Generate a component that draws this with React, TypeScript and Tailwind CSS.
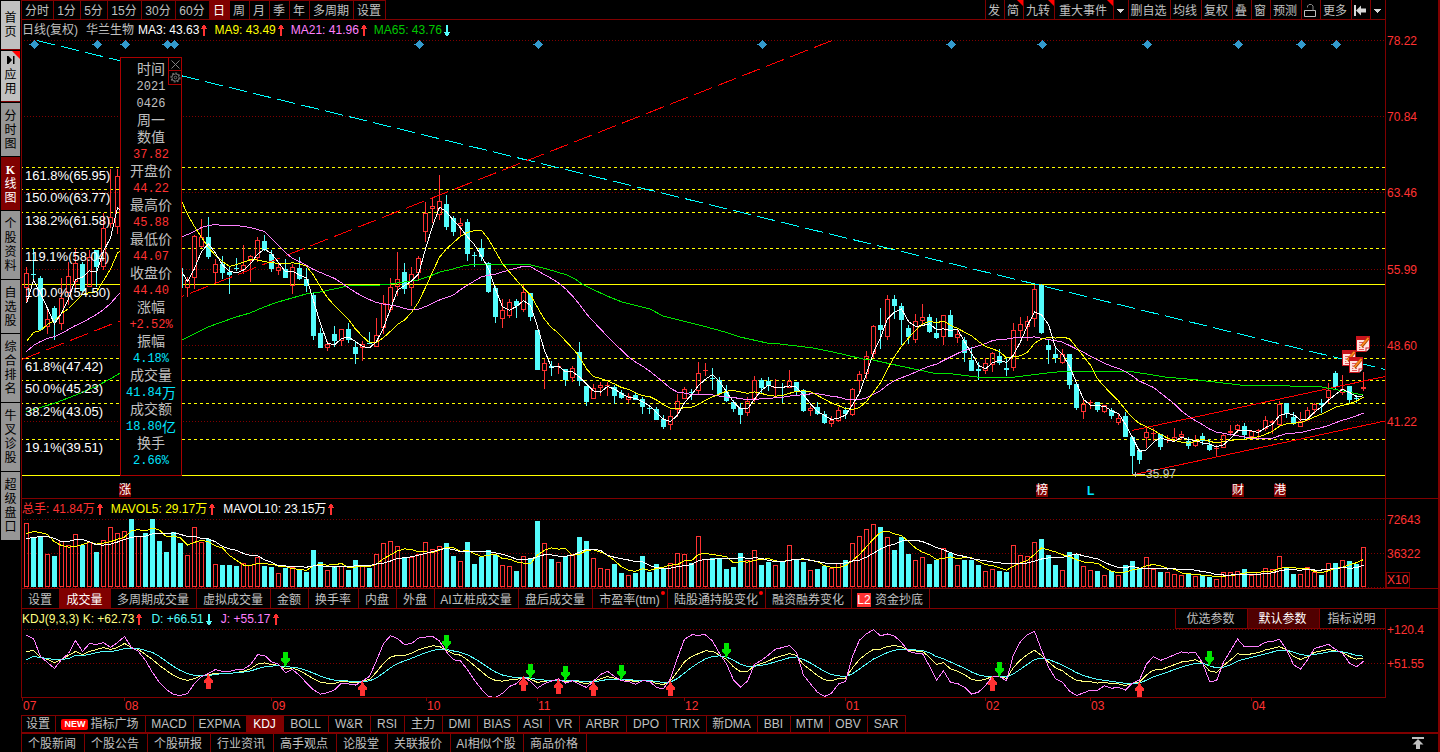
import { useState } from "react";
import type { ReactNode } from "react";
import clsx from "clsx";

type Direction = "u" | "d";
// direction, high, body top, body bottom, low (chart units, y grows downwards)
type Candle = [Direction, number, number, number, number];

const RED = "#ff3232";
const CYAN = "#54fcfc";
const MAROON = "#800000";

const CHART_LEFT = 22;
const CHART_WIDTH = 1363;

const EARLY_CANDLES: Candle[] = [
  ["u", 267, 273, 288, 302], ["d", 249, 274, 275, 282], ["d", 276, 278, 330, 331],
  ["u", 310, 319, 327, 334], ["d", 306, 308, 321, 340], ["u", 278, 298, 324, 330],
  ["u", 262, 276, 293, 305], ["u", 248, 263, 282, 290], ["d", 262, 264, 291, 292],
  ["u", 250, 257, 287, 287], ["d", 250, 250, 267, 287], ["u", 213, 228, 267, 270],
  ["u", 169, 217, 224, 228], ["u", 169, 176, 227, 234],
];

const LATE_CANDLES: Candle[] = [
  ["d", 266, 268, 288, 288], ["u", 277, 280, 288, 297], ["u", 235, 236, 278, 289],
  ["u", 219, 237, 247, 248], ["d", 217, 237, 257, 259], ["u", 259, 264, 273, 284],
  ["d", 256, 264, 273, 279], ["d", 266, 272, 275, 294], ["d", 258, 268, 269, 271],
  ["u", 245, 265, 270, 274], ["u", 255, 256, 261, 282], ["u", 237, 240, 258, 262],
  ["d", 235, 241, 250, 251], ["d", 250, 254, 269, 272], ["u", 262, 267, 271, 275],
  ["d", 259, 269, 278, 278], ["u", 264, 267, 286, 294], ["d", 257, 268, 279, 280],
  ["d", 268, 279, 286, 292], ["d", 292, 295, 336, 340], ["d", 328, 333, 348, 348],
  ["u", 341, 344, 348, 351], ["d", 326, 334, 341, 347], ["u", 329, 329, 341, 346],
  ["d", 323, 329, 340, 343], ["d", 342, 347, 354, 364], ["u", 341, 344, 348, 361],
  ["d", 332, 343, 344, 344], ["u", 318, 335, 347, 347], ["u", 295, 303, 328, 334],
  ["u", 278, 287, 310, 312], ["u", 252, 279, 287, 296], ["d", 263, 272, 289, 294],
  ["u", 267, 274, 288, 306], ["u", 256, 258, 273, 281], ["u", 202, 213, 232, 242],
  ["u", 198, 206, 209, 223], ["u", 175, 201, 215, 220], ["d", 195, 204, 227, 230],
  ["d", 216, 218, 232, 236], ["u", 218, 223, 226, 236], ["d", 219, 222, 254, 261],
  ["d", 252, 255, 256, 267], ["d", 239, 248, 257, 261], ["d", 262, 263, 292, 293],
  ["d", 286, 288, 317, 323], ["u", 299, 310, 319, 328], ["u", 299, 302, 316, 318],
  ["d", 299, 301, 306, 318], ["u", 285, 292, 310, 312], ["d", 293, 293, 317, 321],
  ["d", 330, 330, 370, 370], ["u", 359, 363, 371, 389], ["d", 361, 366, 368, 376],
  ["u", 363, 366, 367, 374], ["d", 369, 369, 380, 386], ["u", 366, 368, 378, 382],
  ["d", 342, 352, 381, 386], ["d", 386, 386, 402, 406], ["u", 384, 388, 399, 399],
  ["u", 382, 385, 388, 396], ["u", 382, 385, 386, 396], ["d", 385, 387, 396, 404],
  ["d", 390, 393, 398, 399], ["u", 393, 396, 400, 403], ["d", 393, 395, 400, 400],
  ["d", 397, 399, 407, 414], ["d", 405, 408, 409, 414], ["d", 407, 409, 420, 420],
  ["d", 415, 419, 427, 429], ["u", 410, 416, 425, 430], ["u", 394, 401, 410, 417],
  ["u", 387, 389, 399, 399], ["d", 389, 392, 393, 400], ["u", 362, 373, 391, 394],
  ["u", 363, 370, 371, 376], ["d", 368, 378, 379, 390], ["d", 377, 380, 394, 395],
  ["d", 385, 392, 401, 402], ["d", 400, 402, 409, 412], ["d", 403, 408, 415, 424],
  ["u", 397, 401, 413, 416], ["u", 376, 380, 399, 402], ["d", 378, 380, 388, 393],
  ["d", 377, 381, 386, 391], ["u", 379, 387, 388, 397], ["d", 383, 387, 388, 403],
  ["u", 370, 381, 388, 388], ["d", 382, 382, 391, 396], ["d", 389, 390, 411, 412],
  ["u", 406, 408, 411, 416], ["d", 402, 407, 414, 415], ["d", 411, 414, 423, 424],
  ["u", 416, 420, 424, 427], ["u", 407, 410, 421, 422], ["d", 407, 410, 414, 419],
  ["u", 388, 389, 415, 416], ["u", 371, 374, 381, 393], ["u", 351, 356, 374, 379],
  ["u", 325, 326, 354, 358], ["d", 308, 325, 330, 349], ["u", 295, 299, 337, 340],
  ["d", 295, 299, 306, 319], ["d", 303, 306, 320, 345], ["d", 325, 328, 337, 344],
  ["u", 314, 321, 340, 343], ["u", 304, 317, 321, 325], ["d", 314, 317, 332, 333],
  ["d", 318, 333, 338, 339], ["u", 315, 315, 337, 345], ["d", 310, 315, 337, 337],
  ["u", 329, 334, 338, 343], ["d", 337, 340, 353, 362], ["d", 347, 360, 371, 371],
  ["d", 362, 369, 371, 380], ["u", 358, 363, 371, 374], ["u", 352, 353, 365, 372],
  ["d", 349, 356, 363, 365], ["d", 357, 368, 370, 376], ["u", 323, 330, 368, 371],
  ["u", 317, 324, 331, 338], ["u", 316, 321, 327, 341], ["u", 285, 289, 319, 327],
  ["d", 284, 285, 333, 334], ["d", 339, 345, 350, 364], ["d", 346, 354, 358, 363],
  ["u", 349, 354, 363, 364], ["d", 354, 354, 385, 389], ["d", 383, 384, 408, 410],
  ["u", 400, 404, 412, 419], ["u", 400, 402, 403, 409], ["d", 402, 402, 410, 412],
  ["u", 405, 405, 412, 413], ["d", 408, 410, 416, 419], ["u", 414, 418, 423, 425],
  ["d", 412, 416, 437, 437], ["d", 436, 437, 456, 475], ["d", 449, 450, 460, 464],
  ["u", 427, 432, 438, 448], ["u", 428, 433, 434, 441], ["d", 434, 434, 447, 450],
  ["u", 435, 439, 440, 443], ["u", 428, 437, 441, 441], ["u", 431, 434, 437, 440],
  ["d", 437, 441, 446, 449], ["u", 435, 440, 446, 447], ["d", 433, 436, 441, 445],
  ["d", 439, 445, 450, 451], ["u", 445, 448, 449, 456], ["u", 434, 435, 448, 448],
  ["u", 425, 431, 433, 436], ["u", 424, 425, 430, 433], ["d", 423, 426, 435, 439],
  ["u", 430, 431, 437, 438], ["u", 429, 430, 431, 438], ["u", 416, 420, 429, 431],
  ["u", 420, 421, 423, 434], ["u", 401, 404, 425, 426], ["d", 403, 403, 414, 418],
  ["d", 412, 417, 424, 425], ["u", 412, 421, 427, 427], ["u", 407, 410, 420, 421],
  ["u", 403, 404, 410, 414], ["d", 399, 403, 405, 413], ["u", 383, 390, 398, 403],
  ["d", 371, 373, 387, 389], ["u", 375, 389, 393, 395], ["d", 386, 386, 400, 403],
  ["d", 395, 398, 399, 403], ["u", 372, 387, 389, 391],
];

// bars 14 to 21 sit under the quote panel
const HIDDEN: Direction[] = ["u", "d", "u", "d", "d", "d", "d", "d"];

const CANDLES: (Candle | null)[] = [
  ...EARLY_CANDLES,
  ...HIDDEN.map(() => null),
  ...LATE_CANDLES,
];

const VOLUMES = [
  64, 50, 50, 33, 31, 46, 42, 53, 42, 45, 35, 47, 60, 54, 56, 68, 51, 54, 68, 46,
  35, 55, 44, 32, 60, 45, 48, 23, 22, 22, 21, 24, 22, 30, 21, 20, 14, 19, 20, 18,
  15, 37, 25, 17, 20, 21, 17, 27, 21, 19, 33, 44, 46, 41, 29, 30, 33, 45, 38, 41,
  44, 31, 26, 45, 23, 30, 37, 32, 22, 21, 16, 31, 29, 66, 44, 28, 25, 31, 33, 50,
  46, 29, 19, 18, 23, 14, 12, 14, 31, 15, 23, 19, 24, 34, 33, 24, 51, 28, 29, 28,
  18, 20, 34, 27, 37, 22, 25, 22, 25, 42, 28, 25, 17, 18, 21, 19, 24, 27, 44, 51,
  58, 63, 60, 50, 37, 50, 33, 27, 30, 23, 27, 39, 34, 22, 27, 27, 22, 16, 18, 16,
  15, 42, 32, 31, 45, 48, 32, 22, 17, 35, 33, 21, 17, 16, 12, 16, 12, 22, 26, 19,
  30, 18, 15, 15, 13, 12, 14, 11, 12, 10, 8, 15, 15, 16, 18, 12, 15, 19, 18, 31,
  19, 13, 13, 20, 15, 12, 24, 24, 27, 26, 23, 40,
];

const MA65 =
  "26,412 55,403 76,395 97,386 112,378 120,373 182,340 208,327 222,322 236,317 250,313 264,307 278,302 292,298 306,294 320,292 334,289 348,286 380,285 390,284 404,282 418,280 430,276 440,272 453,269 463,266 475,264 527,264 547,269 567,275 575,279 582,284 592,289 607,296 622,302 650,309 663,316 687,322 703,326 725,332 740,337 767,343 780,344 813,348 833,352 863,359 873,360 900,366 933,373 953,374 985,378 1015,377 1047,373 1067,371 1128,371 1165,377 1198,380 1240,385 1263,386 1277,385 1290,386 1317,386 1343,391 1363,395";

const K_START = [
  651, 650, 657, 659, 662, 659, 655, 651, 654, 651, 649, 647, 649, 647, 643, 647,
  649, 654, 659, 665, 670, 675, 678, 680, 678, 675, 674, 673, 673, 673, 672,
];
const D_START = [
  659, 656, 657, 658, 659, 659, 658, 655, 655, 654, 652, 651, 651, 650, 648, 648,
  648, 650, 652, 656, 661, 666, 670, 673, 675, 675, 675, 674, 673, 673, 672,
];
const J_START = [
  635, 638, 656, 662, 668, 659, 653, 640, 651, 643, 644, 642, 647, 642, 636, 647,
  651, 660, 672, 682, 689, 694, 695, 693, 683, 676, 673, 669, 671, 671, 669,
];

type Series = (number | null)[];

const barX = (i: number) => 26.5 + 7 * i;

const percentX = (x: number) => `${((x - CHART_LEFT) / CHART_WIDTH) * 100}%`;

function average(values: Series, n: number, known: Record<number, number>) {
  return values.map((_, i) => {
    if (known[i] !== undefined) return known[i];
    if (i < n - 1) return null;
    const win = values.slice(i - n + 1, i + 1);
    if (win.some((v) => v === null)) return null;
    return win.reduce<number>((sum, v) => sum + (v ?? 0), 0) / n;
  });
}

function known(...runs: [number, number[]][]) {
  const result: Record<number, number> = {};
  runs.forEach(([start, values]) =>
    values.forEach((v, i) => {
      result[start + i] = v;
    }),
  );
  return result;
}

const toPoints = (series: Series) =>
  series
    .map((y, i) => (y === null ? "" : `${barX(i)},${y + 0.5}`))
    .filter(Boolean)
    .join(" ");

const closes: Series = CANDLES.map((c) =>
  c ? (c[0] === "u" ? c[2] : c[3]) : null,
);

const ma3 = average(closes, 3, known([0, [303, 280]], [22, [269, 281]]));
const ma9 = average(
  closes,
  9,
  known(
    [0, [341, 332, 330, 324, 320, 313, 308, 301]],
    [22, [198, 214, 226, 237, 247, 255, 261, 266, 264]],
  ),
);
const ma21 = average(
  closes,
  21,
  known(
    [0, [351, 345, 341, 338, 336, 333, 329, 325, 322, 318, 314, 309, 303, 295]],
    [22, [237, 234, 231, 227, 225, 224, 225, 225, 225, 226, 227]],
    [33, [229, 231, 238, 245, 252, 258, 261, 265, 269, 272]],
  ),
);

const volumeToY = (v: number | null) => (v === null ? null : 587 - v);
const mavol5 = average(VOLUMES, 5, known([0, [54, 56, 55, 53]])).map(volumeToY);
const mavol10 = average(
  VOLUMES,
  10,
  known([0, [49, 50, 51, 51, 49, 46, 46, 48, 48]]),
).map(volumeToY);

function buildKdj() {
  const scale = 34 / 68.85;
  const toY = (v: number) => 663 - (v - 51.55) * scale;
  const k = [...K_START];
  const d = [...D_START];
  const j = [...J_START];
  let kv = 51.55 + (663 - 671.5) / scale;
  let dv = 51.55 + (663 - 672) / scale;
  for (let i = k.length; i < CANDLES.length; i++) {
    const win = CANDLES.slice(i - 8, i + 1).filter((c): c is Candle => !!c);
    const high = Math.min(...win.map((c) => c[1]));
    const low = Math.max(...win.map((c) => c[4]));
    const rsv = ((low - (closes[i] ?? low)) / (low - high)) * 100;
    kv = (kv * 2 + rsv) / 3;
    dv = (dv * 2 + kv) / 3;
    k.push(toY(kv));
    d.push(toY(dv));
    j.push(toY(3 * kv - 2 * dv));
  }
  return { k, d, j };
}

const kdj = buildKdj();

const FIB_LEVELS = [
  { y: 167, label: "161.8%(65.95)" },
  { y: 189, label: "150.0%(63.77)" },
  { y: 212, label: "138.2%(61.58)" },
  { y: 248, label: "119.1%(58.04)" },
  { y: 284, label: "100.0%(54.50)", solid: true },
  { y: 358, label: "61.8%(47.42)" },
  { y: 380, label: "50.0%(45.23)" },
  { y: 403, label: "38.2%(43.05)" },
  { y: 439, label: "19.1%(39.51)" },
  { y: 475, label: "", solid: true },
];

const PRICE_TICKS = [
  { y: 40, label: "78.22" },
  { y: 116, label: "70.84" },
  { y: 192, label: "63.46" },
  { y: 269, label: "55.99" },
  { y: 345, label: "48.60" },
  { y: 421, label: "41.22" },
];

const DIAMONDS = [34, 97, 125, 167, 174, 419, 538, 762, 951, 1042, 1147, 1238, 1301, 1336];

const EVENTS = [
  { x: 119, label: "涨" },
  { x: 1036, label: "榜" },
  { x: 1232, label: "财" },
  { x: 1274, label: "港" },
];

const SELL_SIGNALS = [
  [285, 652], [446, 635], [530, 664], [565, 666], [621, 665], [726, 643], [999, 662], [1209, 651],
];
const BUY_SIGNALS = [
  [208, 674], [362, 681], [523, 676], [558, 679], [593, 681], [670, 681], [992, 676], [1139, 682],
];

const MONTHS = [
  { x: 22, label: "07" },
  { x: 124, label: "08" },
  { x: 271, label: "09" },
  { x: 426, label: "10" },
  { x: 537, label: "11" },
  { x: 684, label: "12" },
  { x: 845, label: "01" },
  { x: 985, label: "02" },
  { x: 1090, label: "03" },
  { x: 1251, label: "04" },
];

const SIDE_TABS = [
  { label: "首页", cls: "h-[49px] border-b border-[#800000] bg-[#c0c0c0] leading-[13px]" },
  { label: "应用", cls: "h-[51px] border-b border-[#800000] bg-[#c0c0c0]", icon: true },
  { label: "分时图", cls: "h-[53px] bg-[#969696]" },
  { label: "K线图", cls: "h-[53px] bg-[#800000] text-white", active: true },
  { label: "个股资料", cls: "h-[68px] bg-[#969696]" },
  { label: "自选股", cls: "h-[53px] bg-[#969696]" },
  { label: "综合排名", cls: "h-[68px] bg-[#969696]" },
  { label: "牛叉诊股", cls: "h-[68px] bg-[#969696]" },
  { label: "超级盘口", cls: "h-[68px] bg-[#969696]" },
];

const PERIODS = [
  { label: "分时", w: "w-8" },
  { label: "1分", w: "w-[27px]" },
  { label: "5分", w: "w-[27px]" },
  { label: "15分", w: "w-[34px]" },
  { label: "30分", w: "w-[34px]" },
  { label: "60分", w: "w-[34px]" },
  { label: "日", w: "w-5" },
  { label: "周", w: "w-5" },
  { label: "月", w: "w-5" },
  { label: "季", w: "w-5" },
  { label: "年", w: "w-5" },
  { label: "多周期", w: "w-11" },
  { label: "设置", w: "w-8" },
];

const TOOLS: { label: string; w: string; hot?: boolean; icon?: ReactNode }[] = [
  { label: "发", w: "w-[19px]" },
  { label: "简", w: "w-[19px]", hot: true },
  { label: "九转", w: "w-[31px]", hot: true },
  { label: "重大事件", w: "w-[59px]", hot: true },
  { label: "事件菜单", w: "w-[15px]", icon: <Caret /> },
  { label: "删自选", w: "w-[42px]" },
  { label: "均线", w: "w-[31px]" },
  { label: "复权", w: "w-[31px]" },
  { label: "叠", w: "w-[19px]" },
  { label: "窗", w: "w-[19px]" },
  { label: "预测", w: "w-[31px]" },
  { label: "锁定", w: "w-[19px]", icon: <LockIcon /> },
  { label: "更多", w: "w-[31px]" },
  { label: "收起", w: "w-[19px]", icon: <CollapseIcon /> },
  { label: "收起菜单", w: "w-[15px]", icon: <Caret /> },
];

const VOLUME_TABS = [
  { label: "设置", w: "w-[38px]" },
  { label: "成交量", w: "w-[51px]" },
  { label: "多周期成交量", w: "w-[86px]" },
  { label: "虚拟成交量", w: "w-[74px]" },
  { label: "金额", w: "w-[38px]" },
  { label: "换手率", w: "w-[50px]" },
  { label: "内盘", w: "w-[38px]" },
  { label: "外盘", w: "w-[38px]" },
  { label: "AI立桩成交量", w: "w-[84px]" },
  { label: "盘后成交量", w: "w-[74px]" },
  { label: "市盈率(ttm)", w: "w-[75px]", dot: true },
  { label: "陆股通持股变化", w: "w-[98px]", dot: true },
  { label: "融资融券变化", w: "w-[86px]" },
  { label: "资金抄底", w: "w-[78px]", level2: true },
];

const INDICATORS = [
  { label: "设置", w: "w-[34px]" },
  { label: "指标广场", w: "w-[90px]", fresh: true },
  { label: "MACD", w: "w-12" },
  { label: "EXPMA", w: "w-[53px]" },
  { label: "KDJ", w: "w-[37px]" },
  { label: "BOLL", w: "w-[45px]" },
  { label: "W&R", w: "w-[42px]" },
  { label: "RSI", w: "w-[34px]" },
  { label: "主力", w: "w-[38px]" },
  { label: "DMI", w: "w-[35px]" },
  { label: "BIAS", w: "w-10" },
  { label: "ASI", w: "w-8" },
  { label: "VR", w: "w-[30px]" },
  { label: "ARBR", w: "w-[47px]" },
  { label: "DPO", w: "w-10" },
  { label: "TRIX", w: "w-10" },
  { label: "新DMA", w: "w-[51px]" },
  { label: "BBI", w: "w-[33px]" },
  { label: "MTM", w: "w-[39px]" },
  { label: "OBV", w: "w-[38px]" },
  { label: "SAR", w: "w-[38px]" },
];

const NEWS_TABS = [
  { label: "个股新闻", w: "w-[63px]" },
  { label: "个股公告", w: "w-[63px]" },
  { label: "个股研报", w: "w-[63px]" },
  { label: "行业资讯", w: "w-[63px]" },
  { label: "高手观点", w: "w-[63px]" },
  { label: "论股堂", w: "w-[51px]" },
  { label: "关联报价", w: "w-[63px]" },
  { label: "AI相似个股", w: "w-[73px]" },
  { label: "商品价格", w: "w-[63px]" },
];

const QUOTE_ROWS: { text: string; unit?: string; tone: "label" | "date" | "up" | "info" }[] = [
  { text: "时间", tone: "label" },
  { text: "2021", tone: "date" },
  { text: "0426", tone: "date" },
  { text: "周一", tone: "label" },
  { text: "数值", tone: "label" },
  { text: "37.82", tone: "up" },
  { text: "开盘价", tone: "label" },
  { text: "44.22", tone: "up" },
  { text: "最高价", tone: "label" },
  { text: "45.88", tone: "up" },
  { text: "最低价", tone: "label" },
  { text: "44.07", tone: "up" },
  { text: "收盘价", tone: "label" },
  { text: "44.40", tone: "up" },
  { text: "涨幅", tone: "label" },
  { text: "+2.52%", tone: "up" },
  { text: "振幅", tone: "label" },
  { text: "4.18%", tone: "info" },
  { text: "成交量", tone: "label" },
  { text: "41.84", unit: "万", tone: "info" },
  { text: "成交额", tone: "label" },
  { text: "18.80", unit: "亿", tone: "info" },
  { text: "换手", tone: "label" },
  { text: "2.66%", tone: "info" },
];

const TONES = {
  label: "pb-0.5 text-sm text-[#c0c0c0]",
  date: "font-['Liberation_Mono',monospace] text-xs text-[#c0c0c0]",
  up: "font-['Liberation_Mono',monospace] text-xs text-[#ff3232]",
  info: "font-['Liberation_Mono',monospace] text-xs text-[#00e5ff]",
};

function Caret() {
  return (
    <svg viewBox="0 0 7 4" className="h-1 w-[7px]" fill="#d8d8d8" shapeRendering="crispEdges">
      <path d="M0 0h7v1H0zM1 1h5v1H1zM2 2h3v1H2zM3 3h1v1H3z" />
    </svg>
  );
}

function LockIcon() {
  return (
    <svg viewBox="0 0 12 15" className="h-[15px] w-3" fill="none" stroke="#c0c0c0">
      <path d="M.5 7.5h11v6H.5z" />
      <path d="M3.500 4.500V3L5 1.500h2.500L9 3v4.500" stroke="#8a8a8a" />
    </svg>
  );
}

function CollapseIcon() {
  return (
    <svg viewBox="0 0 12 11" className="h-[11px] w-3" fill="#d8d8d8">
      <path d="M0 0h2v11H0zM2 5.500 7 .5v3h5v4H7v3z" />
    </svg>
  );
}

function TopIcon() {
  return (
    <svg viewBox="0 0 12 12" className="h-3 w-3" fill="#c0c0c0">
      <path d="M0 0h12v2H0zM6 2l5.500 5.500H8V12H4V7.500H.5z" />
    </svg>
  );
}

function TrendArrow({ down }: { down?: boolean }) {
  return (
    <svg
      viewBox="0 0 6 11"
      className={clsx("h-[11px] w-1.5", down && "rotate-180")}
      fill={down ? CYAN : RED}
      shapeRendering="crispEdges"
    >
      <path d="M2 0h2v1H2zM1 1h4v2H1zM0 3h6v1H0zM2 4h2v7H2z" />
    </svg>
  );
}

function NoteIcon({ x, y }: { x: number; y: number }) {
  return (
    <g transform={`translate(${x} ${y})`}>
      <path d="M0 0h14v12l-4 4H0z" fill="#c8141c" />
      <path d="M1 4h12v7.500H9.500V15H1z" fill="#ffe4e0" />
      <path d="M10.500 12.500h3l-3 3z" fill="#fff" />
      <path d="M3 6.500h4M3 9h3M3 11.500h5M3 13.500h5" stroke="#e0585c" />
      <path d="M5.500 10.500 12.500 2" stroke="#a04000" strokeWidth="3" />
      <path d="M5.500 10 12.500 1.800" stroke="#ff8a1e" strokeWidth="1.800" />
      <path d="M4 12.500l.8-2.500 1.700 1.500z" fill="#fff3c4" />
    </g>
  );
}

function Grid({ lines }: { lines: number[] }) {
  return (
    <>
      {lines.map((y) => (
        <line
          key={y}
          x1="24"
          x2="1385"
          y1={y + 0.5}
          y2={y + 0.5}
          stroke={MAROON}
          strokeDasharray="1 2"
        />
      ))}
    </>
  );
}

function CandleShape({ candle, index }: { candle: Candle; index: number }) {
  const [dir, high, top, bottom, low] = candle;
  const x = barX(index);
  if (dir === "d") {
    return (
      <g fill={CYAN}>
        <rect x={x - 0.5} y={high} width="1" height={Math.max(low - high, 1)} />
        <rect x={x - 2.5} y={top} width="5" height={Math.max(bottom - top, 1)} />
      </g>
    );
  }
  return (
    <g fill={RED}>
      {top > high && <rect x={x - 0.5} y={high} width="1" height={top - high} />}
      {low > bottom && <rect x={x - 0.5} y={bottom} width="1" height={low - bottom} />}
      {bottom - top < 3 ? (
        <rect x={x - 2.5} y={top} width="5" height={Math.max(bottom - top, 1)} />
      ) : (
        <rect x={x - 2} y={top + 0.5} width="4" height={bottom - top - 1} fill="none" stroke={RED} />
      )}
    </g>
  );
}

function PriceChart() {
  return (
    <svg
      viewBox="22 40 1363 458"
      preserveAspectRatio="none"
      className="block h-[458px] w-full"
      fill="none"
      shapeRendering="crispEdges"
    >
      <Grid lines={PRICE_TICKS.map((t) => t.y)} />
      {FIB_LEVELS.map((level) => (
        <line
          key={level.y}
          x1="22"
          x2="1385"
          y1={level.y + 0.5}
          y2={level.y + 0.5}
          stroke="#ffff00"
          strokeDasharray={level.solid ? undefined : "3 3"}
          strokeDashoffset="2"
        />
      ))}
      {CANDLES.map((c, i) => c && <CandleShape key={i} candle={c} index={i} />)}
      <line x1="37" y1="40.5" x2="1385" y2="369.5" stroke="#00ffff" strokeDasharray="18.5 6.2" />
      <line x1="22" y1="359.5" x2="832" y2="40.5" stroke="#ff0000" strokeDasharray="19.300 6.500" />
      <line x1="1132" y1="430.5" x2="1385" y2="376.5" stroke="#ff0000" />
      <line x1="1132" y1="475" x2="1385" y2="421" stroke="#ff0000" />
      <polyline points={MA65} stroke="#00e600" />
      <polyline points={toPoints(ma21)} stroke="#ff80ff" />
      <polyline points={toPoints(ma9)} stroke="#ffff00" />
      <polyline points={toPoints(ma3)} stroke="#ffffff" />
      {DIAMONDS.map((x) => (
        <path key={x} d={`M${x + 0.5} 40l5 4.500-5 4.500-5-4.500z`} fill="#3399cc" />
      ))}
      <path d="M1133 474.500h12M1135.500 472v5" stroke="#c0c0c0" />
      <g shapeRendering="auto">
        <NoteIcon x={1356} y={336} />
        <NoteIcon x={1342} y={350} />
        <NoteIcon x={1349} y={357} />
      </g>
    </svg>
  );
}

function VolumeChart() {
  return (
    <svg
      viewBox="22 519 1363 69"
      preserveAspectRatio="none"
      className="block h-[69px] w-full"
      fill="none"
      shapeRendering="crispEdges"
    >
      <Grid lines={[519, 553, 587]} />
      {VOLUMES.map((v, i) => {
        const dir = CANDLES[i]?.[0] ?? HIDDEN[i - 14];
        return dir === "d" ? (
          <rect key={i} x={barX(i) - 2.5} y={587 - v} width="5" height={v} fill={CYAN} />
        ) : (
          <rect key={i} x={barX(i) - 2} y={587.5 - v} width="4" height={v - 1} stroke={RED} />
        );
      })}
      <polyline points={toPoints(mavol5)} stroke="#ffff00" />
      <polyline points={toPoints(mavol10)} stroke="#ffffff" />
    </svg>
  );
}

function KdjChart() {
  return (
    <svg
      viewBox="22 629 1363 68"
      preserveAspectRatio="none"
      className="block h-[68px] w-full"
      fill="none"
      shapeRendering="crispEdges"
    >
      <Grid lines={[629, 663]} />
      <polyline points={toPoints(kdj.k)} stroke="#ffff80" />
      <polyline points={toPoints(kdj.d)} stroke={CYAN} />
      <polyline points={toPoints(kdj.j)} stroke="#ff80ff" />
      {SELL_SIGNALS.map(([x, y]) => (
        <path
          key={x}
          d={`M${x - 2} ${y}h5v6h2v2l-3 4-1 3h-1l-1-3-3-4v-2h2z`}
          fill="#00e600"
        />
      ))}
      {BUY_SIGNALS.map(([x, y]) => (
        <path
          key={x}
          d={`M${x - 2} ${y + 15}h5v-6h2v-2l-3-4-1-3h-1l-1 3-3 4v2h2z`}
          fill={RED}
        />
      ))}
    </svg>
  );
}

function Reading({
  label,
  down,
  className,
}: {
  label: string;
  down?: boolean;
  className: string;
}) {
  return (
    <span className={clsx("flex items-center gap-0.5", className)}>
      {label}
      <TrendArrow down={down} />
    </span>
  );
}

function AxisLabel({ top, children }: { top: number; children: ReactNode }) {
  return (
    <span className="absolute left-px -translate-y-1/2 leading-3 text-[#ff3232]" style={{ top }}>
      {children}
    </span>
  );
}

function QuotePanel() {
  return (
    <aside className="absolute top-[17px] left-[98px] w-[62px] border border-[#aa0000] bg-black pt-[3px] pb-1.5">
      <div className="absolute -top-px -right-px flex w-3.5 flex-col border border-[#aa0000]">
        <button aria-label="关闭" className="flex h-3 items-center justify-center">
          <svg viewBox="0 0 9 9" className="h-[9px] w-[9px]" stroke="#808080">
            <path d="M.5.5l8 8M8.500.5l-8 8" />
          </svg>
        </button>
        <button
          aria-label="参数"
          className="flex h-3.5 items-center justify-center border-t border-[#aa0000]"
        >
          <svg viewBox="0 0 11 11" className="h-[11px] w-[11px]" fill="none" stroke="#707070">
            <circle cx="5.500" cy="5.500" r="4.500" strokeDasharray="2 1.400" strokeWidth="1.200" />
            <circle cx="5.500" cy="5.500" r="3.600" />
            <circle cx="5.500" cy="5.500" r="1.300" />
          </svg>
        </button>
      </div>
      {QUOTE_ROWS.map((row, i) => (
        <div
          key={i}
          className={clsx("flex h-[17px] items-center justify-center", TONES[row.tone])}
        >
          {row.text}
          {row.unit && (
            <span className="pb-0.5 font-['Noto_Sans_CJK_SC',sans-serif] text-sm leading-none">
              {row.unit}
            </span>
          )}
        </div>
      ))}
    </aside>
  );
}

const App: React.FC = () => {
  const [period, setPeriod] = useState("日");
  const [volumeTab, setVolumeTab] = useState("成交量");
  const [indicator, setIndicator] = useState("KDJ");

  return (
    <div className="flex min-h-screen border-r-2 border-[#800000] bg-black font-['Liberation_Sans','Noto_Sans_CJK_SC',sans-serif] text-xs text-[#c0c0c0]">
      <nav className="flex w-[21px] shrink-0 flex-col gap-px pt-px pr-px pl-px">
        {SIDE_TABS.map((tab) => (
          <button
            key={tab.label}
            className={clsx(
              "relative flex flex-col items-center justify-center leading-[14px]",
              !tab.active && "text-black",
              tab.cls,
            )}
          >
            {tab.icon && (
              <>
                <span className="absolute top-0 right-0 h-2 w-2 bg-[#ff0000] [clip-path:polygon(0_0,100%_0,100%_100%)]" />
                <svg viewBox="0 0 8 8" className="mb-1 h-2 w-2" fill="#000">
                  <path d="M0 0h1.500l3.500 4-3.500 4H0zM6 0h1.500v8H6z" />
                </svg>
              </>
            )}
            {[...tab.label].map((ch) => (
              <span
                key={ch}
                className={clsx(ch === "K" && "font-['Liberation_Serif',serif] font-bold")}
              >
                {ch}
              </span>
            ))}
          </button>
        ))}
      </nav>

      <main className="flex min-w-0 flex-1 flex-col">
        <div className="border-l border-[#800000]">
          <div className="flex">
            <header className="flex h-5 min-w-0 flex-1 justify-between border-r border-b border-[#800000]">
              <div className="flex border-t border-[#800000]">
                {PERIODS.map((p) => (
                  <button
                    key={p.label}
                    onClick={() => setPeriod(p.label)}
                    className={clsx(
                      "border-r border-[#800000] pt-px pr-px whitespace-nowrap",
                      p.w,
                      p.label === period && "bg-[#800000] text-white",
                    )}
                  >
                    {p.label}
                  </button>
                ))}
              </div>
              <div className="flex">
                {TOOLS.map((t) => (
                  <button
                    key={t.label}
                    aria-label={t.label}
                    className={clsx(
                      "relative flex items-center justify-center border-l border-[#800000] pt-0.5 pr-0.5 whitespace-nowrap",
                      t.w,
                    )}
                  >
                    {t.icon ?? t.label}
                    {t.hot && (
                      <span className="absolute top-0 right-0 h-1.5 w-1.5 bg-[#ff0000] [clip-path:polygon(0_0,100%_0,100%_100%)]" />
                    )}
                  </button>
                ))}
              </div>
            </header>
            <div className="w-[52px]" />
          </div>

          <section className="flex border-b border-[#800000]">
            <div className="relative min-w-0 flex-1 border-r border-[#800000]">
              <div className="flex h-5 items-center gap-2 whitespace-nowrap">
                <span>日线(复权)</span>
                <span>华兰生物</span>
                <div className="-ml-1 flex gap-[7px]">
                  <Reading label="MA3: 43.63" className="text-white" />
                  <Reading label="MA9: 43.49" className="text-[#ffff00]" />
                  <Reading label="MA21: 41.96" className="text-[#ff80ff]" />
                  <Reading label="MA65: 43.76" down className="text-[#00c800]" />
                </div>
              </div>
              <div className="relative">
                <PriceChart />
                {FIB_LEVELS.map((level) => (
                  <span
                    key={level.y}
                    className="absolute left-[3px] text-[13px] leading-[18px] text-white"
                    style={{ top: level.y - 40 }}
                  >
                    {level.label}
                  </span>
                ))}
                <span
                  className="absolute top-[428px] leading-3"
                  style={{ left: percentX(1146) }}
                >
                  35.97
                </span>
                {EVENTS.map((e) => (
                  <span
                    key={e.label}
                    className="absolute top-[444px] h-[13px] w-3 bg-[#800000] leading-[13px] text-white"
                    style={{ left: percentX(e.x) }}
                  >
                    {e.label}
                  </span>
                ))}
                <span
                  className="absolute top-[445px] leading-3 font-bold text-[#00e5ff]"
                  style={{ left: percentX(1087) }}
                >
                  L
                </span>
                <QuotePanel />
              </div>
            </div>
            <div className="relative w-[52px]">
              {PRICE_TICKS.map((t) => (
                <AxisLabel key={t.label} top={t.y - 19}>
                  {t.label}
                </AxisLabel>
              ))}
            </div>
          </section>

          <section className="flex border-b border-[#800000]">
            <div className="min-w-0 flex-1 border-r border-[#800000]">
              <div className="flex h-5 items-center gap-2 whitespace-nowrap">
                <Reading label="总手: 41.84万" className="text-[#ff3232]" />
                <Reading label="MAVOL5: 29.17万" className="text-[#ffff00]" />
                <Reading label="MAVOL10: 23.15万" className="text-white" />
              </div>
              <VolumeChart />
            </div>
            <div className="relative w-[52px]">
              <AxisLabel top={21}>72643</AxisLabel>
              <AxisLabel top={55}>36322</AxisLabel>
              <span className="absolute bottom-0 left-0 border border-[#800000] pr-px leading-[14px] text-[#ff3232]">
                X10
              </span>
            </div>
          </section>

          <div className="flex h-5 border-b border-[#800000]">
            {VOLUME_TABS.map((t) => (
              <button
                key={t.label}
                onClick={() => setVolumeTab(t.label)}
                className={clsx(
                  "relative flex shrink-0 items-center justify-center gap-1 border-r border-[#800000] pt-0.5 pr-px whitespace-nowrap",
                  t.w,
                  t.label === volumeTab && "bg-[#800000] text-white",
                )}
              >
                {t.level2 && (
                  <span className="h-3.5 w-3.5 bg-[#ff3232] leading-[14px] text-white">L2</span>
                )}
                {t.label}
                {t.dot && (
                  <span className="absolute top-0.5 right-0.5 h-1 w-1 rounded-full bg-[#ff0000]" />
                )}
              </button>
            ))}
          </div>

          <section className="flex">
            <div className="min-w-0 flex-1 border-r border-b border-[#800000]">
              <div className="flex h-5 justify-between">
                <div className="flex items-center gap-[9px] whitespace-nowrap">
                  <Reading label="KDJ(9,3,3) K: +62.73" className="text-[#ffff80]" />
                  <Reading label="D: +66.51" down className="text-[#54fcfc]" />
                  <Reading label="J: +55.17" className="text-[#ff80ff]" />
                </div>
                <div className="flex border-b border-[#800000]">
                  <button className="w-[72px] border-l border-[#800000] pt-px pr-0.5">
                    优选参数
                  </button>
                  <button className="w-[72px] border-l border-[#800000] bg-[#500000] pt-px pr-0.5 text-white">
                    默认参数
                  </button>
                  <button className="w-[66px] border-l border-[#800000] pt-px pr-0.5">
                    指标说明
                  </button>
                </div>
              </div>
              <KdjChart />
            </div>
            <div className="relative w-[52px]">
              <AxisLabel top={21}>+120.4</AxisLabel>
              <AxisLabel top={55}>+51.55</AxisLabel>
            </div>
          </section>
        </div>

        <div className="relative mr-[53px] ml-px h-[17px]">
          {MONTHS.map((m) => (
            <div
              key={m.label}
              className="absolute top-0 flex leading-4 text-[#ff3232]"
              style={{ left: percentX(m.x) }}
            >
              <span className="h-[3px] w-px bg-[#800000]" />
              {m.label}
            </div>
          ))}
        </div>

        <div className="border-b-2 border-l border-[#800000]">
          <div className="flex h-[17px] w-max border-t border-[#800000]">
            {INDICATORS.map((t) => (
              <button
                key={t.label}
                onClick={() => setIndicator(t.label)}
                className={clsx(
                  "flex items-center justify-center gap-0.5 border-r border-[#800000] pr-px whitespace-nowrap",
                  t.w,
                  t.label === indicator && "bg-[#800000] text-white",
                )}
              >
                {t.fresh && (
                  <span className="w-[27px] rounded-xs bg-[#ff0000] text-[9px] leading-[11px] font-bold text-white">
                    NEW
                  </span>
                )}
                {t.label}
              </button>
            ))}
          </div>
        </div>

        <footer className="flex flex-1 items-stretch border-l border-[#800000]">
          {NEWS_TABS.map((t) => (
            <button
              key={t.label}
              className={clsx(
                "h-[18px] border-r border-[#800000] pt-px pr-0.5 whitespace-nowrap",
                t.w,
              )}
            >
              {t.label}
            </button>
          ))}
          <button aria-label="置顶" className="mr-3.5 ml-auto flex h-[18px] items-center">
            <TopIcon />
          </button>
        </footer>
      </main>
    </div>
  );
};

export default App;
